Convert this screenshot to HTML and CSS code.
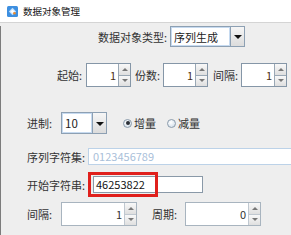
FILE: index.html
```html
<!DOCTYPE html>
<html lang="zh-CN">
<head>
<meta charset="UTF-8">
<title>数据对象管理</title>
<link rel="stylesheet" href="styles.css">
</head>
<body>
<div class="titlebar">
  <svg class="logo" width="11" height="11" viewBox="0 0 11 11">
    <rect x="0" y="0" width="11" height="11" rx="1.5" fill="#3d8fe0"/>
    <path d="M5.5 1.8 L9.2 5.5 L5.5 9.2 L1.8 5.5 Z" fill="#bfe0ff"/>
    <path d="M5.5 3.4 L7.6 5.5 L5.5 7.6 L3.4 5.5 Z" fill="#ffffff"/>
    <circle cx="7.4" cy="7.2" r="1.3" fill="#f08c2a"/>
  </svg>
  <span class="title">数据对象管理</span>
</div>
<div class="panel">
  <div class="row r1">
    <span class="lbl" style="width:72px">数据对象类型:</span>
    <div class="combo c-type"><span class="val">序列生成</span><span class="drop"><i></i></span></div>
  </div>

  <div class="row r2">
    <span class="lbl" style="width:29px">起始:</span>
    <div class="spin s-small"><span class="num">1</span><span class="arrows"><i class="up"></i><i class="dn"></i></span></div>
    <span class="lbl gap4" style="width:28px">份数:</span>
    <div class="spin s-small"><span class="num">1</span><span class="arrows"><i class="up"></i><i class="dn"></i></span></div>
    <span class="lbl gap5" style="width:28px">间隔:</span>
    <div class="spin s-small s-last"><span class="num">1</span><span class="arrows"><i class="up"></i><i class="dn"></i></span></div>
  </div>

  <div class="row r3">
    <span class="lbl" style="width:34px">进制:</span>
    <div class="combo c-base"><span class="val">10</span><span class="drop"><i></i></span></div>
    <label class="radio first"><span class="dot checked"></span>增量</label>
    <label class="radio"><span class="dot"></span>减量</label>
  </div>

  <div class="row r4">
    <span class="lbl" style="width:61px">序列字符集:</span>
    <div class="field disabled">0123456789</div>
  </div>

  <div class="row r5">
    <span class="lbl" style="width:66px">开始字符串:</span>
    <div class="field start">46253822</div>
    <div class="mark"></div>
  </div>

  <div class="row r6">
    <span class="lbl" style="width:34px">间隔:</span>
    <div class="spin s-wide"><span class="num">1</span><span class="arrows"><i class="up"></i><i class="dn"></i></span></div>
    <span class="lbl gap15" style="width:33px">周期:</span>
    <div class="spin s-wide"><span class="num">0</span><span class="arrows"><i class="up"></i><i class="dn"></i></span></div>
  </div>
</div>
</body>
</html>
```

FILE: styles.css
```css
* {
  margin: 0;
  padding: 0;
  box-sizing: border-box;
}
body {
  width: 291px;
  height: 235px;
  overflow: hidden;
  background-color: #eeeeee;
  font-family: "Noto Sans CJK SC", "DejaVu Sans", sans-serif;
  font-size: 11px;
  color: #333;
}
.titlebar {
  height: 23px;
  background-color: #fff;
  border-bottom: 1px solid #d4d4d4;
  display: flex;
  align-items: center;
  padding-left: 7px;
}
.logo {
  display: block;
}
.title {
  margin-left: 5px;
  font-size: 9.5px;
  color: #111;
}
.panel {
  height: 212px;
  border-left: 1px solid #7c7c7c;
}
.row {
  display: flex;
  align-items: center;
  position: relative;
}
.lbl {
  flex: none;
  white-space: nowrap;
  color: #333;
}
.gap4 { margin-left: 4px; }
.gap5 { margin-left: 5px; }
.gap15 { margin-left: 15px; }

.r1 { margin-top: 3px; height: 21px; padding-left: 97px; }
.r2 { margin-top: 16px; height: 24px; padding-left: 56px; }
.r3 { margin-top: 25px; height: 22px; padding-left: 26px; }
.r4 { margin-top: 14px; height: 17px; padding-left: 26px; }
.r5 { margin-top: 7px; height: 25px; padding-left: 26px; }
.r6 { margin-top: 5px; height: 24px; padding-left: 26px; }

/* combo box */
.combo {
  display: flex;
  height: 100%;
  border: 1px solid #8da0b3;
  background-color: #fff;
}
.combo .val {
  flex: 1;
  border: 1px solid #c6daf0;
  padding-left: 2px;
  line-height: 19px;
  color: #222;
}
.combo .drop {
  width: 14px;
  border-left: 1px solid #8da0b3;
  background: linear-gradient(#f6f6f6, #dcdcdc);
  display: flex;
  align-items: center;
  justify-content: center;
}
.combo .drop i {
  border-left: 4px solid transparent;
  border-right: 4px solid transparent;
  border-top: 4px solid #111;
  margin-top: 1px;
}
.c-type { width: 75px; }
.c-base { width: 46px; }
.c-base .val { font-size: 11.5px; }

/* spinners */
.spin {
  display: flex;
  height: 100%;
  border: 1px solid #8596a7;
  background-color: #fff;
}
.spin .num {
  flex: 1;
  text-align: right;
  padding-right: 2px;
  line-height: 22px;
  color: #4a2f14;
}
.spin .arrows {
  width: 12px;
  display: flex;
  flex-direction: column;
  border-left: 1px solid #9aa8b5;
}
.spin .arrows i {
  flex: 1;
  background: linear-gradient(#f8f8f8, #dfdfdf);
  display: flex;
  align-items: center;
  justify-content: center;
}
.spin .arrows i + i {
  border-top: 1px solid #9aa8b5;
}
.spin .up::after {
  content: "";
  border-left: 3px solid transparent;
  border-right: 3px solid transparent;
  border-bottom: 3px solid #777;
}
.spin .dn::after {
  content: "";
  border-left: 3px solid transparent;
  border-right: 3px solid transparent;
  border-top: 3px solid #777;
}
.s-small { width: 45px; }
.s-last { width: 46px; }
.s-wide {
  width: 76px;
  border-color: #a8b4bf;
}
.s-wide .num { color: #333; }
.s-wide .arrows {
  border-left-color: #c0c8d0;
}
.s-wide .arrows i + i { border-top-color: #c0c8d0; }

/* radios */
.radio {
  display: flex;
  align-items: center;
  color: #333;
}
.radio.first { margin-left: 16px; }
.radio + .radio { margin-left: 11px; }
.dot {
  width: 9px;
  height: 9px;
  border-radius: 50%;
  border: 1px solid #8a9bab;
  background: radial-gradient(circle at 40% 35%, #ffffff, #c9d8e6);
  margin-right: 2px;
  display: flex;
  align-items: center;
  justify-content: center;
}
.dot.checked::after {
  content: "";
  width: 4px;
  height: 4px;
  border-radius: 50%;
  background-color: #2a2f36;
}

/* text fields */
.field {
  height: 17px;
  background-color: #fff;
  border: 1px solid #8a99a8;
  padding-left: 2px;
  line-height: 15px;
  white-space: nowrap;
}
.field.disabled {
  flex: 1;
  border-color: #bcd2e8;
  border-right: none;
  color: #a9c0d9;
  padding-left: 4px;
}
.field.start {
  width: 110px;
  color: #111;
}
.mark {
  position: absolute;
  left: 87px;
  top: 0;
  width: 70px;
  height: 25px;
  border: 3px solid #e0201c;
}
```
